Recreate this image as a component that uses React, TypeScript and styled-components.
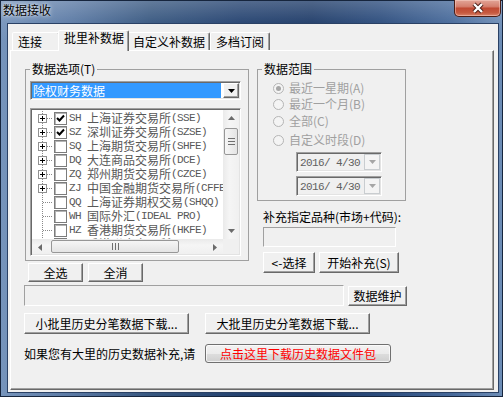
import React from 'react'
import styled, { createGlobalStyle, css } from 'styled-components'

const ui = `"Noto Sans CJK SC", "Noto Sans CJK JP", sans-serif`
const mono = `"Liberation Mono", "Noto Sans CJK SC", monospace`

const GlobalStyle = createGlobalStyle`
  html, body { margin: 0; padding: 0; }
  body { background: #24406c; font-family: ${ui}; font-size: 12px; color: #000; }
  * { box-sizing: border-box; }
`

// classic 3d edges
const raised = css`
  border: 1px solid;
  border-color: #fff #696969 #696969 #fff;
  box-shadow: inset -1px -1px #a0a0a0;
  background: #f0f0f0;
`
const sunken = css`
  border: 1px solid;
  border-color: #a0a0a0 #fff #fff #a0a0a0;
  box-shadow: inset 1px 1px #696969, inset -1px -1px #e3e3e3;
`

const Window = styled.div`
  width: 503px;
  height: 397px;
  display: flex;
  flex-direction: column;
  padding: 0 3px 3px 6px;
  border: 1px solid #16253d;
  background:
    linear-gradient(180deg, rgba(255,255,255,0.22) 0px, rgba(255,255,255,0.05) 21px, rgba(0,0,0,0) 40px),
    linear-gradient(90deg, #7694bb 0%, #5a79a4 14%, #36567f 30%, #23416f 48%, #1e3b68 62%, #2b4c7d 76%, #46699a 90%, #6d8db6 100%);
`
const TitleBar = styled.div`
  height: 22px;
  margin: 0 -3px 0 -6px;
  display: flex;
  align-items: flex-start;
`
const TitleText = styled.div`
  margin-top: 2px;
  padding-left: 2px;
  line-height: 14px;
  font-size: 12px;
  text-shadow: 0 0 5px rgba(255,255,255,0.85), 0 0 2px rgba(255,255,255,0.7);
`
const CloseButton = styled.div`
  margin: -1px 1px 0 auto;
  width: 47px;
  height: 17px;
  display: flex;
  align-items: center;
  justify-content: center;
  border: 1px solid #4a1d16;
  border-top: none;
  border-radius: 0 0 5px 5px;
  background: linear-gradient(180deg, #e2a597 0%, #d5806f 40%, #c04a33 52%, #c65a40 80%, #d9826a 100%);
  box-shadow: inset 0 0 0 1px rgba(255,220,210,0.45);
`
const Client = styled.div`
  flex: 1;
  display: flex;
  flex-direction: column;
  border: 1px solid #2a4165;
  background: #f0f0f0;
  padding: 6px 4px 2px 2px;
`
const TabStrip = styled.div`
  height: 20px;
  padding-left: 2px;
  display: flex;
  align-items: flex-end;
`
const Tab = styled.div<{ $w: number; $active?: boolean }>`
  position: relative;
  width: ${p => p.$w}px;
  height: 18px;
  padding: 2px 0 0 5px;
  border: 1px solid;
  border-bottom: none;
  border-color: #fff #696969 transparent #fff;
  box-shadow: inset -1px 0 #a0a0a0;
  border-radius: 2px 2px 0 0;
  line-height: 14px;
  white-space: nowrap;
  background: #f0f0f0;
  ${p => p.$active && css`
    height: 21px;
    margin: 0 -2px -1px;
    padding: 0 0 0 5px;
    z-index: 1;
  `}
`
const Panel = styled.div`
  flex: 1;
  display: flex;
  flex-direction: column;
  border: 1px solid;
  border-color: #fff #696969 #696969 #fff;
  box-shadow: inset -1px -1px #a0a0a0;
  padding: 11px 0 0 13px;
`
const TopSection = styled.div`
  display: flex;
  gap: 8px;
  margin-left: 1px;
`
const Column = styled.div<{ $w: number }>`
  width: ${p => p.$w}px;
  display: flex;
  flex-direction: column;
`
const GroupBox = styled.fieldset<{ $pad: string }>`
  margin: 0;
  min-width: 0;
  padding: ${p => p.$pad};
  border: 1px solid #a0a0a0;
  display: flex;
  flex-direction: column;
`
const Legend = styled.legend`
  padding: 0 2px;
  margin-left: 0;
  line-height: 14px;
`
const Combo = styled.div`
  height: 19px;
  display: flex;
  gap: 2px;
  padding: 1px;
  ${sunken};
  background: #fff;
`
const ComboValue = styled.div`
  flex: 1;
  background: #3399ff;
  color: #fff;
  line-height: 15px;
  padding-left: 1px;
`
const ArrowButton = styled.div<{ $w: number; $disabled?: boolean }>`
  width: ${p => p.$w}px;
  display: flex;
  align-items: center;
  justify-content: center;
  ${raised};
  ${p => p.$disabled && css`
    border: 1px solid #c9cdd0;
    box-shadow: none;
    background: #f4f4f4;
  `}
`
const ListBox = styled.div`
  margin-top: 8px;
  height: 148px;
  padding: 1px;
  ${sunken};
  background: #fff;
  display: grid;
  grid-template-columns: 1fr 16px;
  grid-template-rows: 1fr 15px;
`
const TreeViewport = styled.div`
  overflow: hidden;
  padding-top: 1px;
`
const TreeRow = styled.div`
  height: 14px;
  display: flex;
  align-items: center;
  white-space: pre;
  color: #585858;
  line-height: 14px;
`
const CheckBox = styled.div`
  width: 13px;
  height: 13px;
  flex: none;
  margin-right: 2px;
  border: 1px solid #7c7c7c;
  box-shadow: inset 1px 1px #b4b4b4;
  background: #fff;
  display: flex;
  align-items: center;
  justify-content: center;
`
const Code = styled.span`
  font-family: ${mono};
  font-size: 11px;
  letter-spacing: -0.6px;
`
const VScroll = styled.div`
  background: linear-gradient(90deg, #eaeaea, #f5f5f5 40%, #f0f0f0);
  display: flex;
  flex-direction: column;
`
const HScroll = styled.div`
  background: linear-gradient(180deg, #eaeaea, #f5f5f5 40%, #f0f0f0);
  display: flex;
`
const ScrollArrow = styled.div<{ $size: number }>`
  flex: none;
  width: ${p => p.$size}px;
  height: ${p => p.$size}px;
  display: flex;
  align-items: center;
  justify-content: center;
`
const VThumb = styled.div`
  margin: 2px 1px 0;
  height: 27px;
  border: 1px solid #979797;
  border-radius: 2px;
  background: linear-gradient(90deg, #f6f6f6, #e4e4e4);
  display: flex;
  align-items: center;
  justify-content: center;
`
const HThumb = styled.div`
  margin: 1px 0 1px 3px;
  width: 128px;
  border: 1px solid #979797;
  border-radius: 2px;
  background: linear-gradient(180deg, #f6f6f6, #e4e4e4);
  display: flex;
  align-items: center;
  justify-content: center;
`
const Spacer = styled.div`
  flex: 1;
`
const Corner = styled.div`
  background: #f0f0f0;
`
const Button = styled.button<{ $w: number; $h: number }>`
  width: ${p => p.$w}px;
  height: ${p => p.$h}px;
  padding: 0;
  font-family: ${ui};
  font-size: 12px;
  line-height: 14px;
  color: #000;
  display: flex;
  align-items: center;
  justify-content: center;
  white-space: nowrap;
  ${raised};
`
const ButtonRow = styled.div<{ $gap: number; $top: number; $left?: number }>`
  display: flex;
  gap: ${p => p.$gap}px;
  margin-top: ${p => p.$top}px;
  margin-left: ${p => p.$left || 0}px;
`
const RadioGrid = styled.div`
  margin-left: 11px;
  display: grid;
  grid-template-rows: 16px 17px 19px 14px;
  align-items: start;
`
const RadioLabel = styled.div`
  display: flex;
  align-items: center;
  gap: 5px;
  line-height: 14px;
  color: #a0a0a0;
`
const RadioCircle = styled.div`
  width: 11px;
  height: 11px;
  border-radius: 50%;
  border: 1px solid #b5b5b5;
  background: #f4f4f4;
  display: flex;
  align-items: center;
  justify-content: center;
`
const RadioDot = styled.div`
  width: 5px;
  height: 5px;
  border-radius: 50%;
  background: #a6a6a6;
`
const DatePicker = styled.div<{ $top: number }>`
  margin: ${p => p.$top}px 0 0 34px;
  width: 86px;
  height: 20px;
  padding: 1px 1px 1px 1px;
  ${sunken};
  background: #f0f0f0;
  display: flex;
`
const DateText = styled.div`
  flex: 1;
  padding: 1px 0 0 2px;
  font-family: ${mono};
  font-size: 11px;
  letter-spacing: -0.6px;
  line-height: 16px;
  color: #606060;
  white-space: pre;
`
const FieldLabel = styled.div`
  margin: 9px 0 0 6px;
  line-height: 14px;
  white-space: nowrap;
`
const TextBox = styled.div<{ $w: number; $h: number; $top: number; $left: number }>`
  width: ${p => p.$w}px;
  height: ${p => p.$h}px;
  margin: ${p => p.$top}px 0 0 ${p => p.$left}px;
  ${sunken};
  box-shadow: none;
  background: #f0f0f0;
`
const Row = styled.div<{ $top: number }>`
  display: flex;
  align-items: flex-start;
  margin-top: ${p => p.$top}px;
`
const Note = styled.div`
  width: 181px;
  line-height: 14px;
  white-space: nowrap;
  align-self: center;
`
const LinkButton = styled.button`
  width: 186px;
  height: 19px;
  padding: 0;
  border: 1px solid #707070;
  border-radius: 3px;
  background: linear-gradient(180deg, #f2f2f2 0%, #ebebeb 50%, #dddddd 51%, #cfcfcf 100%);
  box-shadow: inset 0 0 0 1px rgba(255,255,255,0.7);
  font-family: ${ui};
  font-size: 12px;
  line-height: 14px;
  color: #ff0000;
`

const markets = [
  { code: 'SH', name: '上海证券交易所', ex: '(SSE)', checked: true, folder: true },
  { code: 'SZ', name: '深圳证券交易所', ex: '(SZSE)', checked: true, folder: true },
  { code: 'SQ', name: '上海期货交易所', ex: '(SHFE)', folder: true },
  { code: 'DQ', name: '大连商品交易所', ex: '(DCE)', folder: true },
  { code: 'ZQ', name: '郑州期货交易所', ex: '(CZCE)', folder: true },
  { code: 'ZJ', name: '中国金融期货交易所', ex: '(CFFEX)', folder: true },
  { code: 'QQ', name: '上海证券期权交易', ex: '(SHQQ)' },
  { code: 'WH', name: '国际外汇', ex: '(IDEAL PRO)' },
  { code: 'HZ', name: '香港期货交易所', ex: '(HKFE)' },
  { code: 'HK', name: '香港联合交易所', ex: '(HKEX)' },
]

const TreeLines = ({ folder }: { folder?: boolean }) => (
  <svg width="22" height="14" viewBox="0 0 22 14" style={{ flex: 'none' }}>
    <path d="M10.5 0 V14 M11 7.5 H21" stroke="#8a8a8a" strokeDasharray="1 1" />
    {folder && (
      <>
        <rect x="6.5" y="3.5" width="8" height="8" fill="#fff" stroke="#919191" />
        <path d="M8 7.5 H13 M10.5 5 V10" stroke="#000" />
      </>
    )}
  </svg>
)

const Check = () => (
  <svg width="9" height="9" viewBox="0 0 9 9">
    <path d="M1 4 L3.5 6.5 L8 1.5" fill="none" stroke="#000" strokeWidth="2" />
  </svg>
)

const Tri = ({ dir, color = '#000' }: { dir: 'up' | 'down' | 'left' | 'right'; color?: string }) => {
  const d = {
    down: 'M0 0 H7 L3.5 4 Z',
    up: 'M0 4 H7 L3.5 0 Z',
    left: 'M4 0 V7 L0 3.5 Z',
    right: 'M0 0 V7 L4 3.5 Z',
  }[dir]
  const horiz = dir === 'up' || dir === 'down'
  return (
    <svg width={horiz ? 7 : 4} height={horiz ? 4 : 7} viewBox={horiz ? '0 0 7 4' : '0 0 4 7'}>
      <path d={d} fill={color} />
    </svg>
  )
}

const Grip = ({ vertical }: { vertical?: boolean }) => (
  vertical ? (
    <svg width="7" height="7" viewBox="0 0 7 7">
      <path d="M0 0.5 H7 M0 3.5 H7 M0 6.5 H7" stroke="#6f6f6f" />
    </svg>
  ) : (
    <svg width="7" height="7" viewBox="0 0 7 7">
      <path d="M0.5 0 V7 M3.5 0 V7 M6.5 0 V7" stroke="#6f6f6f" />
    </svg>
  )
)

const radios = ['最近一星期(A)', '最近一个月(B)', '全部(C)', '自定义时段(D)']

export default function App() {
  return (
    <>
      <GlobalStyle />
      <Window>
        <TitleBar>
          <TitleText>数据接收</TitleText>
          <CloseButton>
            <svg width="14" height="12" viewBox="0 0 14 12">
              <path d="M3 2 L11 10 M11 2 L3 10" stroke="#4b1d15" strokeWidth="4.2" />
              <path d="M3 2 L11 10 M11 2 L3 10" stroke="#fff" strokeWidth="2.4" />
            </svg>
          </CloseButton>
        </TitleBar>
        <Client>
          <TabStrip>
            <Tab $w={48}>连接</Tab>
            <Tab $w={71} $active>批里补数据</Tab>
            <Tab $w={83}>自定义补数据</Tab>
            <Tab $w={60}>多档订阅</Tab>
          </TabStrip>
          <Panel>
            <TopSection>
              <Column $w={224}>
                <GroupBox $pad="5px 7px 4px 4px">
                  <Legend>数据选项(T)</Legend>
                  <Combo>
                    <ComboValue>除权财务数据</ComboValue>
                    <ArrowButton $w={16}><Tri dir="down" /></ArrowButton>
                  </Combo>
                  <ListBox>
                    <TreeViewport>
                      {markets.map(m => (
                        <TreeRow key={m.code}>
                          <TreeLines folder={m.folder} />
                          <CheckBox>{m.checked && <Check />}</CheckBox>
                          <Code>{m.code} </Code>
                          <span>{m.name}</span>
                          <Code>{m.ex}</Code>
                        </TreeRow>
                      ))}
                    </TreeViewport>
                    <VScroll>
                      <ScrollArrow $size={16}><Tri dir="up" color="#6b6b6b" /></ScrollArrow>
                      <VThumb><Grip vertical /></VThumb>
                      <Spacer />
                      <ScrollArrow $size={16}><Tri dir="down" color="#6b6b6b" /></ScrollArrow>
                    </VScroll>
                    <HScroll>
                      <ScrollArrow $size={16}><Tri dir="left" color="#6b6b6b" /></ScrollArrow>
                      <HThumb><Grip /></HThumb>
                      <Spacer />
                      <ScrollArrow $size={16}><Tri dir="right" color="#6b6b6b" /></ScrollArrow>
                    </HScroll>
                    <Corner />
                  </ListBox>
                </GroupBox>
                <ButtonRow $gap={5} $top={2} $left={3}>
                  <Button $w={55} $h={19}>全选</Button>
                  <Button $w={55} $h={19}>全消</Button>
                </ButtonRow>
              </Column>
              <Column $w={149}>
                <GroupBox $pad="5px 4px 4px 4px">
                  <Legend>数据范围</Legend>
                  <RadioGrid>
                    {radios.map((r, i) => (
                      <RadioLabel key={r}>
                        <RadioCircle>{i === 0 && <RadioDot />}</RadioCircle>
                        {r}
                      </RadioLabel>
                    ))}
                  </RadioGrid>
                  <DatePicker $top={5}>
                    <DateText>2016/ 4/30</DateText>
                    <ArrowButton $w={16} $disabled><Tri dir="down" color="#a6a6a6" /></ArrowButton>
                  </DatePicker>
                  <DatePicker $top={4}>
                    <DateText>2016/ 4/30</DateText>
                    <ArrowButton $w={16} $disabled><Tri dir="down" color="#a6a6a6" /></ArrowButton>
                  </DatePicker>
                </GroupBox>
                <FieldLabel>补充指定品种(市场+代码):</FieldLabel>
                <TextBox $w={133} $h={20} $top={3} $left={6} />
                <ButtonRow $gap={4} $top={5} $left={6}>
                  <Button $w={52} $h={21}>&lt;-选择</Button>
                  <Button $w={80} $h={21}>开始补充(S)</Button>
                </ButtonRow>
              </Column>
            </TopSection>
            <Row $top={3}>
              <TextBox $w={320} $h={21} $top={0} $left={0} />
              <ButtonRow $gap={0} $top={1} $left={4}>
                <Button $w={59} $h={20}>数据维护</Button>
              </ButtonRow>
            </Row>
            <ButtonRow $gap={16} $top={7}>
              <Button $w={165} $h={21}>小批里历史分笔数据下载...</Button>
              <Button $w={165} $h={21}>大批里历史分笔数据下载...</Button>
            </ButtonRow>
            <Row $top={10}>
              <Note>如果您有大里的历史数据补充,请</Note>
              <LinkButton>点击这里下载历史数据文件包</LinkButton>
            </Row>
          </Panel>
        </Client>
      </Window>
    </>
  )
}
